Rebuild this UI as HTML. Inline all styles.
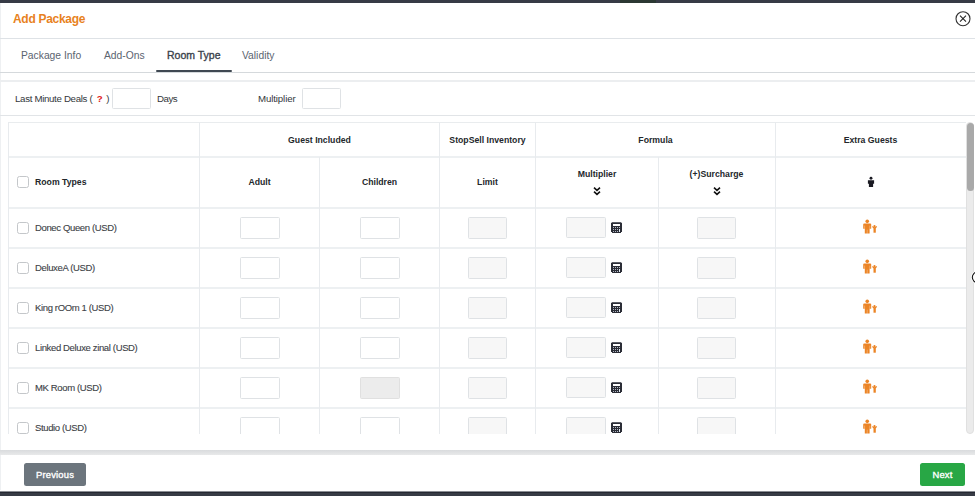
<!DOCTYPE html>
<html><head><meta charset="utf-8">
<style>
*{box-sizing:border-box;margin:0;padding:0}
html,body{width:975px;height:496px;overflow:hidden;background:#fff;font-family:"Liberation Sans",sans-serif;color:#212529}
.abs{position:absolute}
.title{left:13px;top:12px;font-size:12px;letter-spacing:-0.3px;font-weight:bold;color:#e8821e;white-space:nowrap}
.hl{position:absolute;height:1px;background:#e6e9ec}
.vl{position:absolute;width:1px;background:#e8ebee}
.tab{position:absolute;top:49.5px;font-size:10.3px;color:#5b6470;white-space:nowrap}
.tab.act{color:#3a424b;font-size:10.5px;top:48.5px;-webkit-text-stroke:0.35px #3a424b}
.lbl{position:absolute;top:92.5px;font-size:9.7px;color:#33373b;white-space:nowrap;line-height:11px}
.inp{position:absolute;border:1px solid #dfe2e5;background:#fff;border-radius:1.5px}
.inp.g{background:#f7f7f7}
.inp.dg{background:#ececec;border-color:#e0e0e0}
.th{position:absolute;font-size:8.7px;font-weight:bold;color:#23272b;white-space:nowrap;line-height:10px;transform:translateX(-50%)}
.td{position:absolute;font-size:9.5px;letter-spacing:-0.36px;color:#3d4247;-webkit-text-stroke:0.12px #3d4247;white-space:nowrap;line-height:10px}
.cb{position:absolute;width:12px;height:12px;border:1px solid #c4c7ca;border-radius:2.5px;background:#fff}
.btn{position:absolute;top:463px;height:23px;border-radius:2.5px;color:#fff;font-size:9.4px;letter-spacing:0.2px;text-align:center;line-height:24px;-webkit-text-stroke:0.35px #fff}
</style></head><body>
<div class="abs" style="left:0;top:0;width:975px;height:3px;background:#373b46"></div><div class="abs" style="left:620px;top:0;width:36px;height:3px;background:#2b3833"></div>
<div class="abs" style="left:0;top:3px;width:1px;height:487px;background:#eef0f2"></div>
<div class="abs title">Add Package</div>
<svg class="abs" style="left:955px;top:11px" width="16" height="16" viewBox="0 0 16 16"><circle cx="8" cy="7.7" r="7.0" fill="none" stroke="#333" stroke-width="1.1"/><path d="M5.0 4.7L11 10.7M11 4.7L5.0 10.7" stroke="#222" stroke-width="1.05"/></svg>
<div class="hl" style="left:0;top:38px;width:975px;background:#dee2e6"></div>
<div class="tab" style="left:21px">Package Info</div>
<div class="tab" style="left:104px">Add-Ons</div>
<div class="tab act" style="left:167px">Room Type</div>
<div class="tab" style="left:242px">Validity</div>
<div class="hl" style="left:0;top:72px;width:975px;background:#d5d9dc"></div>
<div class="abs" style="left:156px;top:70px;width:76px;height:2px;background:#3f4852;border-radius:1px"></div>
<div class="hl" style="left:0;top:80px;width:975px;height:2px;background:#eceef0"></div>
<div class="lbl" style="left:15px;letter-spacing:-0.32px">Last Minute Deals ( <span style="color:#e0201a;font-weight:bold;margin:0 1.5px 0 2px">?</span> )</div>
<div class="inp" style="left:112px;top:88px;width:39px;height:21px"></div>
<div class="lbl" style="left:157px;letter-spacing:-0.5px">Days</div>
<div class="lbl" style="left:258px;letter-spacing:-0.12px">Multiplier</div>
<div class="inp" style="left:302px;top:88px;width:39px;height:21px"></div>
<div class="hl" style="left:0;top:115px;width:975px;background:#e1e4e7"></div>

<div class="abs" style="left:0;top:0;width:975px;height:434px;overflow:hidden">
<div class="hl" style="left:8px;top:122px;width:958px;background:#e9ecee"></div>
<div class="hl" style="left:8px;top:156px;width:958px;height:2px;background:#edf0f2"></div>
<div class="hl" style="left:8px;top:207px;width:958px;height:2px;background:#edf0f2"></div>
<div class="hl" style="left:8px;top:247px;width:958px;height:2px;background:#edf0f2"></div>
<div class="hl" style="left:8px;top:287px;width:958px;height:2px;background:#edf0f2"></div>
<div class="hl" style="left:8px;top:327px;width:958px;height:2px;background:#edf0f2"></div>
<div class="hl" style="left:8px;top:367px;width:958px;height:2px;background:#edf0f2"></div>
<div class="hl" style="left:8px;top:407px;width:958px;height:2px;background:#edf0f2"></div>
<div class="vl" style="left:8px;top:122px;height:312px"></div>
<div class="vl" style="left:199px;top:122px;height:312px"></div>
<div class="vl" style="left:319px;top:157px;height:277px"></div>
<div class="vl" style="left:439px;top:122px;height:312px"></div>
<div class="vl" style="left:535px;top:122px;height:312px"></div>
<div class="vl" style="left:658px;top:157px;height:277px"></div>
<div class="vl" style="left:775px;top:122px;height:312px"></div>
<div class="th" style="left:319.5px;top:135px">Guest Included</div>
<div class="th" style="left:487.5px;top:135px">StopSell Inventory</div>
<div class="th" style="left:655.5px;top:135px">Formula</div>
<div class="th" style="left:870.5px;top:135px">Extra Guests</div>
<div class="cb" style="left:17px;top:176px"></div>
<div class="th" style="left:35px;top:177px;transform:none">Room Types</div>
<div class="th" style="left:259.5px;top:177px">Adult</div>
<div class="th" style="left:379.5px;top:177px">Children</div>
<div class="th" style="left:487.5px;top:177px">Limit</div>
<div class="th" style="left:597px;top:169px">Multiplier</div>
<svg class="abs" style="left:593px;top:186px" width="8" height="10" viewBox="0 0 8 10"><path d="M1 1.6L4 4.3L7 1.6M1 5.6L4 8.3L7 5.6" fill="none" stroke="#111" stroke-width="1.6"/></svg>
<div class="th" style="left:716.5px;top:169px">(+)Surcharge</div>
<svg class="abs" style="left:712.5px;top:186px" width="8" height="10" viewBox="0 0 8 10"><path d="M1 1.6L4 4.3L7 1.6M1 5.6L4 8.3L7 5.6" fill="none" stroke="#111" stroke-width="1.6"/></svg>
<svg class="abs" style="left:867px;top:176px" width="8" height="11" viewBox="0 0 8 11"><circle cx="4" cy="2.3" r="1.45" fill="#1a1a22"/><path d="M0.9 4.2h6.2v3.5h-1v3.2h-4.2v-3.2h-1z" fill="#1a1a22"/></svg>
<div class="cb" style="left:17px;top:222px"></div>
<div class="td" style="left:35px;top:223px">Donec Queen (USD)</div>
<div class="inp" style="left:240px;top:217px;width:40px;height:22px"></div>
<div class="inp" style="left:360px;top:217px;width:40px;height:22px"></div>
<div class="inp g" style="left:468px;top:217px;width:39px;height:22px"></div>
<div class="inp g" style="left:566px;top:217px;width:40px;height:21px"></div>
<svg class="abs" style="left:611px;top:222px" width="11" height="11" viewBox="0 0 11 11" shape-rendering="crispEdges"><rect x="1" y="0" width="9" height="11" fill="#2b2d36"/><rect x="0" y="1" width="11" height="9" fill="#2b2d36"/><rect x="0" y="0" width="11" height="1" fill="#8d8f96" opacity="0.5"/><rect x="2" y="2" width="7" height="2" fill="#fff"/><rect x="2" y="5" width="1" height="1" fill="#b4b8c6"/><rect x="2" y="7" width="1" height="1" fill="#b4b8c6"/><rect x="2" y="9" width="1" height="1" fill="#b4b8c6"/><rect x="4" y="5" width="1" height="1" fill="#b4b8c6"/><rect x="4" y="7" width="1" height="1" fill="#b4b8c6"/><rect x="4" y="9" width="1" height="1" fill="#b4b8c6"/><rect x="6" y="5" width="1" height="1" fill="#b4b8c6"/><rect x="6" y="7" width="1" height="1" fill="#b4b8c6"/><rect x="6" y="9" width="1" height="1" fill="#b4b8c6"/><rect x="8" y="5" width="1" height="1" fill="#b4b8c6"/><rect x="8" y="7" width="1" height="3" fill="#e3ecf5"/></svg>
<div class="inp g" style="left:697px;top:217px;width:39px;height:22px"></div>
<svg class="abs" style="left:862px;top:219px" width="17" height="16" viewBox="0 0 17 16"><circle cx="5.25" cy="2.35" r="1.8" fill="#ec8425"/><path d="M1.2 5.6Q1.2 4.6 2.2 4.6H8.2Q9.2 4.6 9.2 5.6V9.7H7.6V14.6H2.8V9.7H1.2Z" fill="#ec8425"/><path d="M2.6 6.6V9.8M7.8 6.6V9.8M5.2 10.6V14.8" stroke="#fff" stroke-width="0.45" opacity="0.7"/><circle cx="12.5" cy="7.2" r="1.1" fill="#ec8425"/><path d="M10.4 7.5L12.5 9.2L14.8 7.5" fill="none" stroke="#ec8425" stroke-width="1.1"/><rect x="11.5" y="8.6" width="2.3" height="5.1" fill="#ec8425"/></svg>
<div class="cb" style="left:17px;top:262px"></div>
<div class="td" style="left:35px;top:263px">DeluxeA (USD)</div>
<div class="inp" style="left:240px;top:257px;width:40px;height:22px"></div>
<div class="inp" style="left:360px;top:257px;width:40px;height:22px"></div>
<div class="inp g" style="left:468px;top:257px;width:39px;height:22px"></div>
<div class="inp g" style="left:566px;top:257px;width:40px;height:21px"></div>
<svg class="abs" style="left:611px;top:262px" width="11" height="11" viewBox="0 0 11 11" shape-rendering="crispEdges"><rect x="1" y="0" width="9" height="11" fill="#2b2d36"/><rect x="0" y="1" width="11" height="9" fill="#2b2d36"/><rect x="0" y="0" width="11" height="1" fill="#8d8f96" opacity="0.5"/><rect x="2" y="2" width="7" height="2" fill="#fff"/><rect x="2" y="5" width="1" height="1" fill="#b4b8c6"/><rect x="2" y="7" width="1" height="1" fill="#b4b8c6"/><rect x="2" y="9" width="1" height="1" fill="#b4b8c6"/><rect x="4" y="5" width="1" height="1" fill="#b4b8c6"/><rect x="4" y="7" width="1" height="1" fill="#b4b8c6"/><rect x="4" y="9" width="1" height="1" fill="#b4b8c6"/><rect x="6" y="5" width="1" height="1" fill="#b4b8c6"/><rect x="6" y="7" width="1" height="1" fill="#b4b8c6"/><rect x="6" y="9" width="1" height="1" fill="#b4b8c6"/><rect x="8" y="5" width="1" height="1" fill="#b4b8c6"/><rect x="8" y="7" width="1" height="3" fill="#e3ecf5"/></svg>
<div class="inp g" style="left:697px;top:257px;width:39px;height:22px"></div>
<svg class="abs" style="left:862px;top:259px" width="17" height="16" viewBox="0 0 17 16"><circle cx="5.25" cy="2.35" r="1.8" fill="#ec8425"/><path d="M1.2 5.6Q1.2 4.6 2.2 4.6H8.2Q9.2 4.6 9.2 5.6V9.7H7.6V14.6H2.8V9.7H1.2Z" fill="#ec8425"/><path d="M2.6 6.6V9.8M7.8 6.6V9.8M5.2 10.6V14.8" stroke="#fff" stroke-width="0.45" opacity="0.7"/><circle cx="12.5" cy="7.2" r="1.1" fill="#ec8425"/><path d="M10.4 7.5L12.5 9.2L14.8 7.5" fill="none" stroke="#ec8425" stroke-width="1.1"/><rect x="11.5" y="8.6" width="2.3" height="5.1" fill="#ec8425"/></svg>
<div class="cb" style="left:17px;top:302px"></div>
<div class="td" style="left:35px;top:303px">King rOOm 1 (USD)</div>
<div class="inp" style="left:240px;top:297px;width:40px;height:22px"></div>
<div class="inp" style="left:360px;top:297px;width:40px;height:22px"></div>
<div class="inp g" style="left:468px;top:297px;width:39px;height:22px"></div>
<div class="inp g" style="left:566px;top:297px;width:40px;height:21px"></div>
<svg class="abs" style="left:611px;top:302px" width="11" height="11" viewBox="0 0 11 11" shape-rendering="crispEdges"><rect x="1" y="0" width="9" height="11" fill="#2b2d36"/><rect x="0" y="1" width="11" height="9" fill="#2b2d36"/><rect x="0" y="0" width="11" height="1" fill="#8d8f96" opacity="0.5"/><rect x="2" y="2" width="7" height="2" fill="#fff"/><rect x="2" y="5" width="1" height="1" fill="#b4b8c6"/><rect x="2" y="7" width="1" height="1" fill="#b4b8c6"/><rect x="2" y="9" width="1" height="1" fill="#b4b8c6"/><rect x="4" y="5" width="1" height="1" fill="#b4b8c6"/><rect x="4" y="7" width="1" height="1" fill="#b4b8c6"/><rect x="4" y="9" width="1" height="1" fill="#b4b8c6"/><rect x="6" y="5" width="1" height="1" fill="#b4b8c6"/><rect x="6" y="7" width="1" height="1" fill="#b4b8c6"/><rect x="6" y="9" width="1" height="1" fill="#b4b8c6"/><rect x="8" y="5" width="1" height="1" fill="#b4b8c6"/><rect x="8" y="7" width="1" height="3" fill="#e3ecf5"/></svg>
<div class="inp g" style="left:697px;top:297px;width:39px;height:22px"></div>
<svg class="abs" style="left:862px;top:299px" width="17" height="16" viewBox="0 0 17 16"><circle cx="5.25" cy="2.35" r="1.8" fill="#ec8425"/><path d="M1.2 5.6Q1.2 4.6 2.2 4.6H8.2Q9.2 4.6 9.2 5.6V9.7H7.6V14.6H2.8V9.7H1.2Z" fill="#ec8425"/><path d="M2.6 6.6V9.8M7.8 6.6V9.8M5.2 10.6V14.8" stroke="#fff" stroke-width="0.45" opacity="0.7"/><circle cx="12.5" cy="7.2" r="1.1" fill="#ec8425"/><path d="M10.4 7.5L12.5 9.2L14.8 7.5" fill="none" stroke="#ec8425" stroke-width="1.1"/><rect x="11.5" y="8.6" width="2.3" height="5.1" fill="#ec8425"/></svg>
<div class="cb" style="left:17px;top:342px"></div>
<div class="td" style="left:35px;top:343px">Linked Deluxe zinal (USD)</div>
<div class="inp" style="left:240px;top:337px;width:40px;height:22px"></div>
<div class="inp" style="left:360px;top:337px;width:40px;height:22px"></div>
<div class="inp g" style="left:468px;top:337px;width:39px;height:22px"></div>
<div class="inp g" style="left:566px;top:337px;width:40px;height:21px"></div>
<svg class="abs" style="left:611px;top:342px" width="11" height="11" viewBox="0 0 11 11" shape-rendering="crispEdges"><rect x="1" y="0" width="9" height="11" fill="#2b2d36"/><rect x="0" y="1" width="11" height="9" fill="#2b2d36"/><rect x="0" y="0" width="11" height="1" fill="#8d8f96" opacity="0.5"/><rect x="2" y="2" width="7" height="2" fill="#fff"/><rect x="2" y="5" width="1" height="1" fill="#b4b8c6"/><rect x="2" y="7" width="1" height="1" fill="#b4b8c6"/><rect x="2" y="9" width="1" height="1" fill="#b4b8c6"/><rect x="4" y="5" width="1" height="1" fill="#b4b8c6"/><rect x="4" y="7" width="1" height="1" fill="#b4b8c6"/><rect x="4" y="9" width="1" height="1" fill="#b4b8c6"/><rect x="6" y="5" width="1" height="1" fill="#b4b8c6"/><rect x="6" y="7" width="1" height="1" fill="#b4b8c6"/><rect x="6" y="9" width="1" height="1" fill="#b4b8c6"/><rect x="8" y="5" width="1" height="1" fill="#b4b8c6"/><rect x="8" y="7" width="1" height="3" fill="#e3ecf5"/></svg>
<div class="inp g" style="left:697px;top:337px;width:39px;height:22px"></div>
<svg class="abs" style="left:862px;top:339px" width="17" height="16" viewBox="0 0 17 16"><circle cx="5.25" cy="2.35" r="1.8" fill="#ec8425"/><path d="M1.2 5.6Q1.2 4.6 2.2 4.6H8.2Q9.2 4.6 9.2 5.6V9.7H7.6V14.6H2.8V9.7H1.2Z" fill="#ec8425"/><path d="M2.6 6.6V9.8M7.8 6.6V9.8M5.2 10.6V14.8" stroke="#fff" stroke-width="0.45" opacity="0.7"/><circle cx="12.5" cy="7.2" r="1.1" fill="#ec8425"/><path d="M10.4 7.5L12.5 9.2L14.8 7.5" fill="none" stroke="#ec8425" stroke-width="1.1"/><rect x="11.5" y="8.6" width="2.3" height="5.1" fill="#ec8425"/></svg>
<div class="cb" style="left:17px;top:382px"></div>
<div class="td" style="left:35px;top:383px">MK Room (USD)</div>
<div class="inp" style="left:240px;top:377px;width:40px;height:22px"></div>
<div class="inp dg" style="left:360px;top:377px;width:40px;height:22px"></div>
<div class="inp g" style="left:468px;top:377px;width:39px;height:22px"></div>
<div class="inp g" style="left:566px;top:377px;width:40px;height:21px"></div>
<svg class="abs" style="left:611px;top:382px" width="11" height="11" viewBox="0 0 11 11" shape-rendering="crispEdges"><rect x="1" y="0" width="9" height="11" fill="#2b2d36"/><rect x="0" y="1" width="11" height="9" fill="#2b2d36"/><rect x="0" y="0" width="11" height="1" fill="#8d8f96" opacity="0.5"/><rect x="2" y="2" width="7" height="2" fill="#fff"/><rect x="2" y="5" width="1" height="1" fill="#b4b8c6"/><rect x="2" y="7" width="1" height="1" fill="#b4b8c6"/><rect x="2" y="9" width="1" height="1" fill="#b4b8c6"/><rect x="4" y="5" width="1" height="1" fill="#b4b8c6"/><rect x="4" y="7" width="1" height="1" fill="#b4b8c6"/><rect x="4" y="9" width="1" height="1" fill="#b4b8c6"/><rect x="6" y="5" width="1" height="1" fill="#b4b8c6"/><rect x="6" y="7" width="1" height="1" fill="#b4b8c6"/><rect x="6" y="9" width="1" height="1" fill="#b4b8c6"/><rect x="8" y="5" width="1" height="1" fill="#b4b8c6"/><rect x="8" y="7" width="1" height="3" fill="#e3ecf5"/></svg>
<div class="inp g" style="left:697px;top:377px;width:39px;height:22px"></div>
<svg class="abs" style="left:862px;top:379px" width="17" height="16" viewBox="0 0 17 16"><circle cx="5.25" cy="2.35" r="1.8" fill="#ec8425"/><path d="M1.2 5.6Q1.2 4.6 2.2 4.6H8.2Q9.2 4.6 9.2 5.6V9.7H7.6V14.6H2.8V9.7H1.2Z" fill="#ec8425"/><path d="M2.6 6.6V9.8M7.8 6.6V9.8M5.2 10.6V14.8" stroke="#fff" stroke-width="0.45" opacity="0.7"/><circle cx="12.5" cy="7.2" r="1.1" fill="#ec8425"/><path d="M10.4 7.5L12.5 9.2L14.8 7.5" fill="none" stroke="#ec8425" stroke-width="1.1"/><rect x="11.5" y="8.6" width="2.3" height="5.1" fill="#ec8425"/></svg>
<div class="cb" style="left:17px;top:422px"></div>
<div class="td" style="left:35px;top:423px">Studio (USD)</div>
<div class="inp" style="left:240px;top:417px;width:40px;height:22px"></div>
<div class="inp" style="left:360px;top:417px;width:40px;height:22px"></div>
<div class="inp g" style="left:468px;top:417px;width:39px;height:22px"></div>
<div class="inp g" style="left:566px;top:417px;width:40px;height:21px"></div>
<svg class="abs" style="left:611px;top:422px" width="11" height="11" viewBox="0 0 11 11" shape-rendering="crispEdges"><rect x="1" y="0" width="9" height="11" fill="#2b2d36"/><rect x="0" y="1" width="11" height="9" fill="#2b2d36"/><rect x="0" y="0" width="11" height="1" fill="#8d8f96" opacity="0.5"/><rect x="2" y="2" width="7" height="2" fill="#fff"/><rect x="2" y="5" width="1" height="1" fill="#b4b8c6"/><rect x="2" y="7" width="1" height="1" fill="#b4b8c6"/><rect x="2" y="9" width="1" height="1" fill="#b4b8c6"/><rect x="4" y="5" width="1" height="1" fill="#b4b8c6"/><rect x="4" y="7" width="1" height="1" fill="#b4b8c6"/><rect x="4" y="9" width="1" height="1" fill="#b4b8c6"/><rect x="6" y="5" width="1" height="1" fill="#b4b8c6"/><rect x="6" y="7" width="1" height="1" fill="#b4b8c6"/><rect x="6" y="9" width="1" height="1" fill="#b4b8c6"/><rect x="8" y="5" width="1" height="1" fill="#b4b8c6"/><rect x="8" y="7" width="1" height="3" fill="#e3ecf5"/></svg>
<div class="inp g" style="left:697px;top:417px;width:39px;height:22px"></div>
<svg class="abs" style="left:862px;top:419px" width="17" height="16" viewBox="0 0 17 16"><circle cx="5.25" cy="2.35" r="1.8" fill="#ec8425"/><path d="M1.2 5.6Q1.2 4.6 2.2 4.6H8.2Q9.2 4.6 9.2 5.6V9.7H7.6V14.6H2.8V9.7H1.2Z" fill="#ec8425"/><path d="M2.6 6.6V9.8M7.8 6.6V9.8M5.2 10.6V14.8" stroke="#fff" stroke-width="0.45" opacity="0.7"/><circle cx="12.5" cy="7.2" r="1.1" fill="#ec8425"/><path d="M10.4 7.5L12.5 9.2L14.8 7.5" fill="none" stroke="#ec8425" stroke-width="1.1"/><rect x="11.5" y="8.6" width="2.3" height="5.1" fill="#ec8425"/></svg>
</div>
<div class="abs" style="left:966px;top:122px;width:8px;height:312px;background:#ebebeb;border:1px solid #e0e0e0;border-radius:4px"></div>
<div class="abs" style="left:966.5px;top:122.5px;width:7px;height:68.5px;background:#a9a9a9;border-radius:3.5px"></div>
<svg class="abs" style="left:965px;top:265px" width="10" height="25" viewBox="965 265 10 25"><circle cx="977.6" cy="277.3" r="5.3" fill="none" stroke="#fff" stroke-width="2.6"/><circle cx="977.6" cy="277.3" r="5.3" fill="none" stroke="#111" stroke-width="1.1"/></svg>
<div class="abs" style="left:0;top:450px;width:975px;height:5px;background:linear-gradient(#d9dbdd,#e8e9ea)"></div>
<div class="btn" style="left:24px;width:62px;background:#6c757d">Previous</div>
<div class="btn" style="left:920px;width:45px;background:#28a745">Next</div>
<div class="abs" style="left:0;top:491px;width:975px;height:5px;background:linear-gradient(#8a8d93 0,#8a8d93 1px,#252832 1px,#252832 2px,#373b45 2px)"></div>
</body></html>
